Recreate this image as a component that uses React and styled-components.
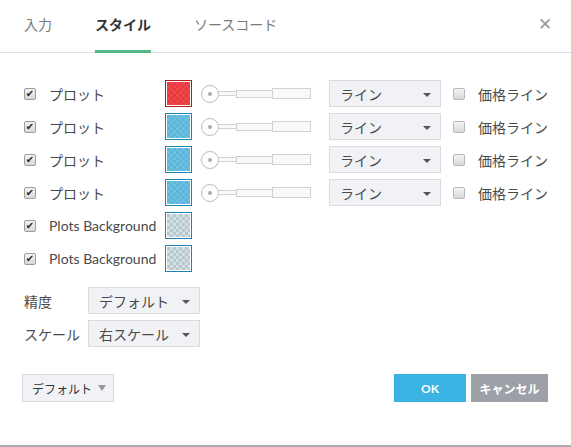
import React from 'react'
import styled, { createGlobalStyle } from 'styled-components'

const GlobalStyle = createGlobalStyle`
  html, body {
    margin: 0;
    padding: 0;
    background: #fff;
  }
  body {
    font-family: Lato, "Noto Sans CJK JP", sans-serif;
    color: #4a4a4a;
  }
`

const FONT = `Lato, "Noto Sans CJK JP", sans-serif`

const Dialog = styled.div`
  width: 571px;
  height: 447px;
  display: flex;
  flex-direction: column;
  box-sizing: border-box;
  border-bottom: 2px solid #a9adb2;
  font-family: ${FONT};
`

const Header = styled.div`
  height: 52px;
  display: flex;
  align-items: stretch;
  padding: 0 19px 0 24px;
  border-bottom: 1px solid #e0e3e6;
`

const Tab = styled.div`
  display: flex;
  align-items: center;
  margin-right: 43px;
  padding-bottom: 3px;
  font-size: 14px;
  font-weight: ${(p) => (p.$active ? 700 : 400)};
  color: ${(p) => (p.$active ? '#333' : '#7a7a7a')};
  border-bottom: 3px solid ${(p) => (p.$active ? '#53b987' : 'transparent')};
  margin-bottom: -1px;
`

const Close = styled.div`
  margin-left: auto;
  display: flex;
  align-items: center;
  padding-bottom: 6px;
  color: #9a9a9a;
  font-size: 17px;
`

const Body = styled.div`
  flex: 1;
  padding: 24px 0 0 24px;
`

const Row = styled.div`
  display: flex;
  align-items: center;
  height: 33px;
`

const Check = styled.span`
  width: 12px;
  height: 12px;
  box-sizing: border-box;
  border: 1px solid ${(p) => (p.$checked ? '#9c9c9c' : '#b8b8b8')};
  border-radius: 2px;
  background: linear-gradient(#f4f4f4, #d8d8d8);
  display: inline-flex;
  align-items: center;
  justify-content: center;
  flex-shrink: 0;
  color: #262626;
  font-size: 10px;
  font-weight: 700;
  line-height: 1;
  font-family: "DejaVu Sans", sans-serif;
`

const Label = styled.span`
  font-size: 14px;
  color: #4a4a4a;
  margin-left: ${(p) => p.$gap || 13}px;
  width: ${(p) => (p.$width ? `${p.$width}px` : 'auto')};
  white-space: nowrap;
  display: flex;
  align-items: center;
`

const Swatch = styled.span`
  width: 27px;
  height: 27px;
  box-sizing: border-box;
  border: 1px solid ${(p) => p.$border};
  padding: 1px;
  flex-shrink: 0;
  display: flex;
  &::after {
    content: '';
    flex: 1;
    background: repeating-conic-gradient(${(p) => p.$a} 0 25%, ${(p) => p.$b} 0 50%) 0 0 / 6px 6px;
  }
`

const Slider = styled.span`
  display: flex;
  align-items: center;
  margin-left: 9px;
`

const Knob = styled.span`
  width: 18px;
  height: 18px;
  box-sizing: border-box;
  border-radius: 50%;
  border: 1px solid #b9bcc2;
  background: #fff;
  display: flex;
  align-items: center;
  justify-content: center;
  &::after {
    content: '';
    width: 4px;
    height: 4px;
    border-radius: 50%;
    background: #a8abb0;
  }
`

const Step = styled.span`
  width: ${(p) => p.$w}px;
  height: ${(p) => p.$h}px;
  box-sizing: border-box;
  border: 1px solid #cfd1d4;
  background: #f9f9f9;
  margin-left: -1px;
`

const Select = styled.div`
  width: ${(p) => p.$w || 112}px;
  height: 27px;
  box-sizing: border-box;
  border: 1px solid #d9dbdf;
  background: #f1f2f5;
  margin-left: ${(p) => p.$ml || 0}px;
  display: flex;
  align-items: center;
  padding: 0 9px 0 10px;
  font-size: 14px;
  color: #4a4a4a;
  flex-shrink: 0;
  &::after {
    content: '';
    margin-left: auto;
    border-left: 4px solid transparent;
    border-right: 4px solid transparent;
    border-top: 4px solid #555;
    margin-top: 2px;
  }
`

const SmallLabel = styled.span`
  width: 64px;
  font-size: 14px;
  color: #4a4a4a;
`

const Settings = styled.div`
  margin-top: 9px;
`

const Footer = styled.div`
  height: 71px;
  display: flex;
  align-items: flex-start;
  padding: 0 23px 0 22px;
`

const DefaultsBtn = styled.div`
  height: 28px;
  box-sizing: border-box;
  border: 1px solid #d6d8dc;
  background: #f1f2f5;
  display: flex;
  align-items: center;
  padding: 0 7px 0 9px;
  font-size: 12px;
  color: #333;
  gap: 6px;
  &::after {
    content: '';
    border-left: 4px solid transparent;
    border-right: 4px solid transparent;
    border-top: 6px solid #999;
  }
`

const Actions = styled.div`
  margin-left: auto;
  display: flex;
  gap: 5px;
`

const Button = styled.div`
  height: 28px;
  width: ${(p) => p.$w}px;
  background: ${(p) => p.$bg};
  color: #fff;
  font-size: 12px;
  font-weight: 700;
  display: flex;
  align-items: center;
  justify-content: center;
`

const plots = [
  { color: 'red' },
  { color: 'blue' },
  { color: 'blue' },
  { color: 'blue' },
]

const swatchColors = {
  red: { border: '#b01c1c', a: '#f0474a', b: '#e63b3e' },
  blue: { border: '#1b84b3', a: '#6cc1e3', b: '#5db5da' },
  bg: { border: '#1b84b3', a: '#d3e0e6', b: '#b7c7ce' },
}

function CheckBox({ checked }) {
  return <Check $checked={checked}>{checked ? '✔' : ''}</Check>
}

function ColorSwatch({ kind }) {
  const c = swatchColors[kind]
  return <Swatch $border={c.border} $a={c.a} $b={c.b} />
}

function WidthSlider() {
  return (
    <Slider>
      <Knob />
      <Step $w={19} $h={5} />
      <Step $w={37} $h={8} />
      <Step $w={39} $h={11} />
    </Slider>
  )
}

export default function App() {
  return (
    <>
      <GlobalStyle />
      <Dialog>
        <Header>
          <Tab>入力</Tab>
          <Tab $active>スタイル</Tab>
          <Tab>ソースコード</Tab>
          <Close>✕</Close>
        </Header>
        <Body>
          {plots.map((p, i) => (
            <Row key={i}>
              <CheckBox checked />
              <Label $width={116}>プロット</Label>
              <ColorSwatch kind={p.color} />
              <WidthSlider />
              <Select $ml={18}>ライン</Select>
              <Label $gap={12}>
                <CheckBox />
              </Label>
              <Label $gap={13}>価格ライン</Label>
            </Row>
          ))}
          {[0, 1].map((i) => (
            <Row key={`bg${i}`}>
              <CheckBox checked />
              <Label $width={116}>Plots Background</Label>
              <ColorSwatch kind="bg" />
            </Row>
          ))}
          <Settings>
            <Row>
              <SmallLabel>精度</SmallLabel>
              <Select>デフォルト</Select>
            </Row>
            <Row>
              <SmallLabel>スケール</SmallLabel>
              <Select>右スケール</Select>
            </Row>
          </Settings>
        </Body>
        <Footer>
          <DefaultsBtn>デフォルト</DefaultsBtn>
          <Actions>
            <Button $w={72} $bg="#3cb3e5">OK</Button>
            <Button $w={77} $bg="#9da0a6">キャンセル</Button>
          </Actions>
        </Footer>
      </Dialog>
    </>
  )
}
